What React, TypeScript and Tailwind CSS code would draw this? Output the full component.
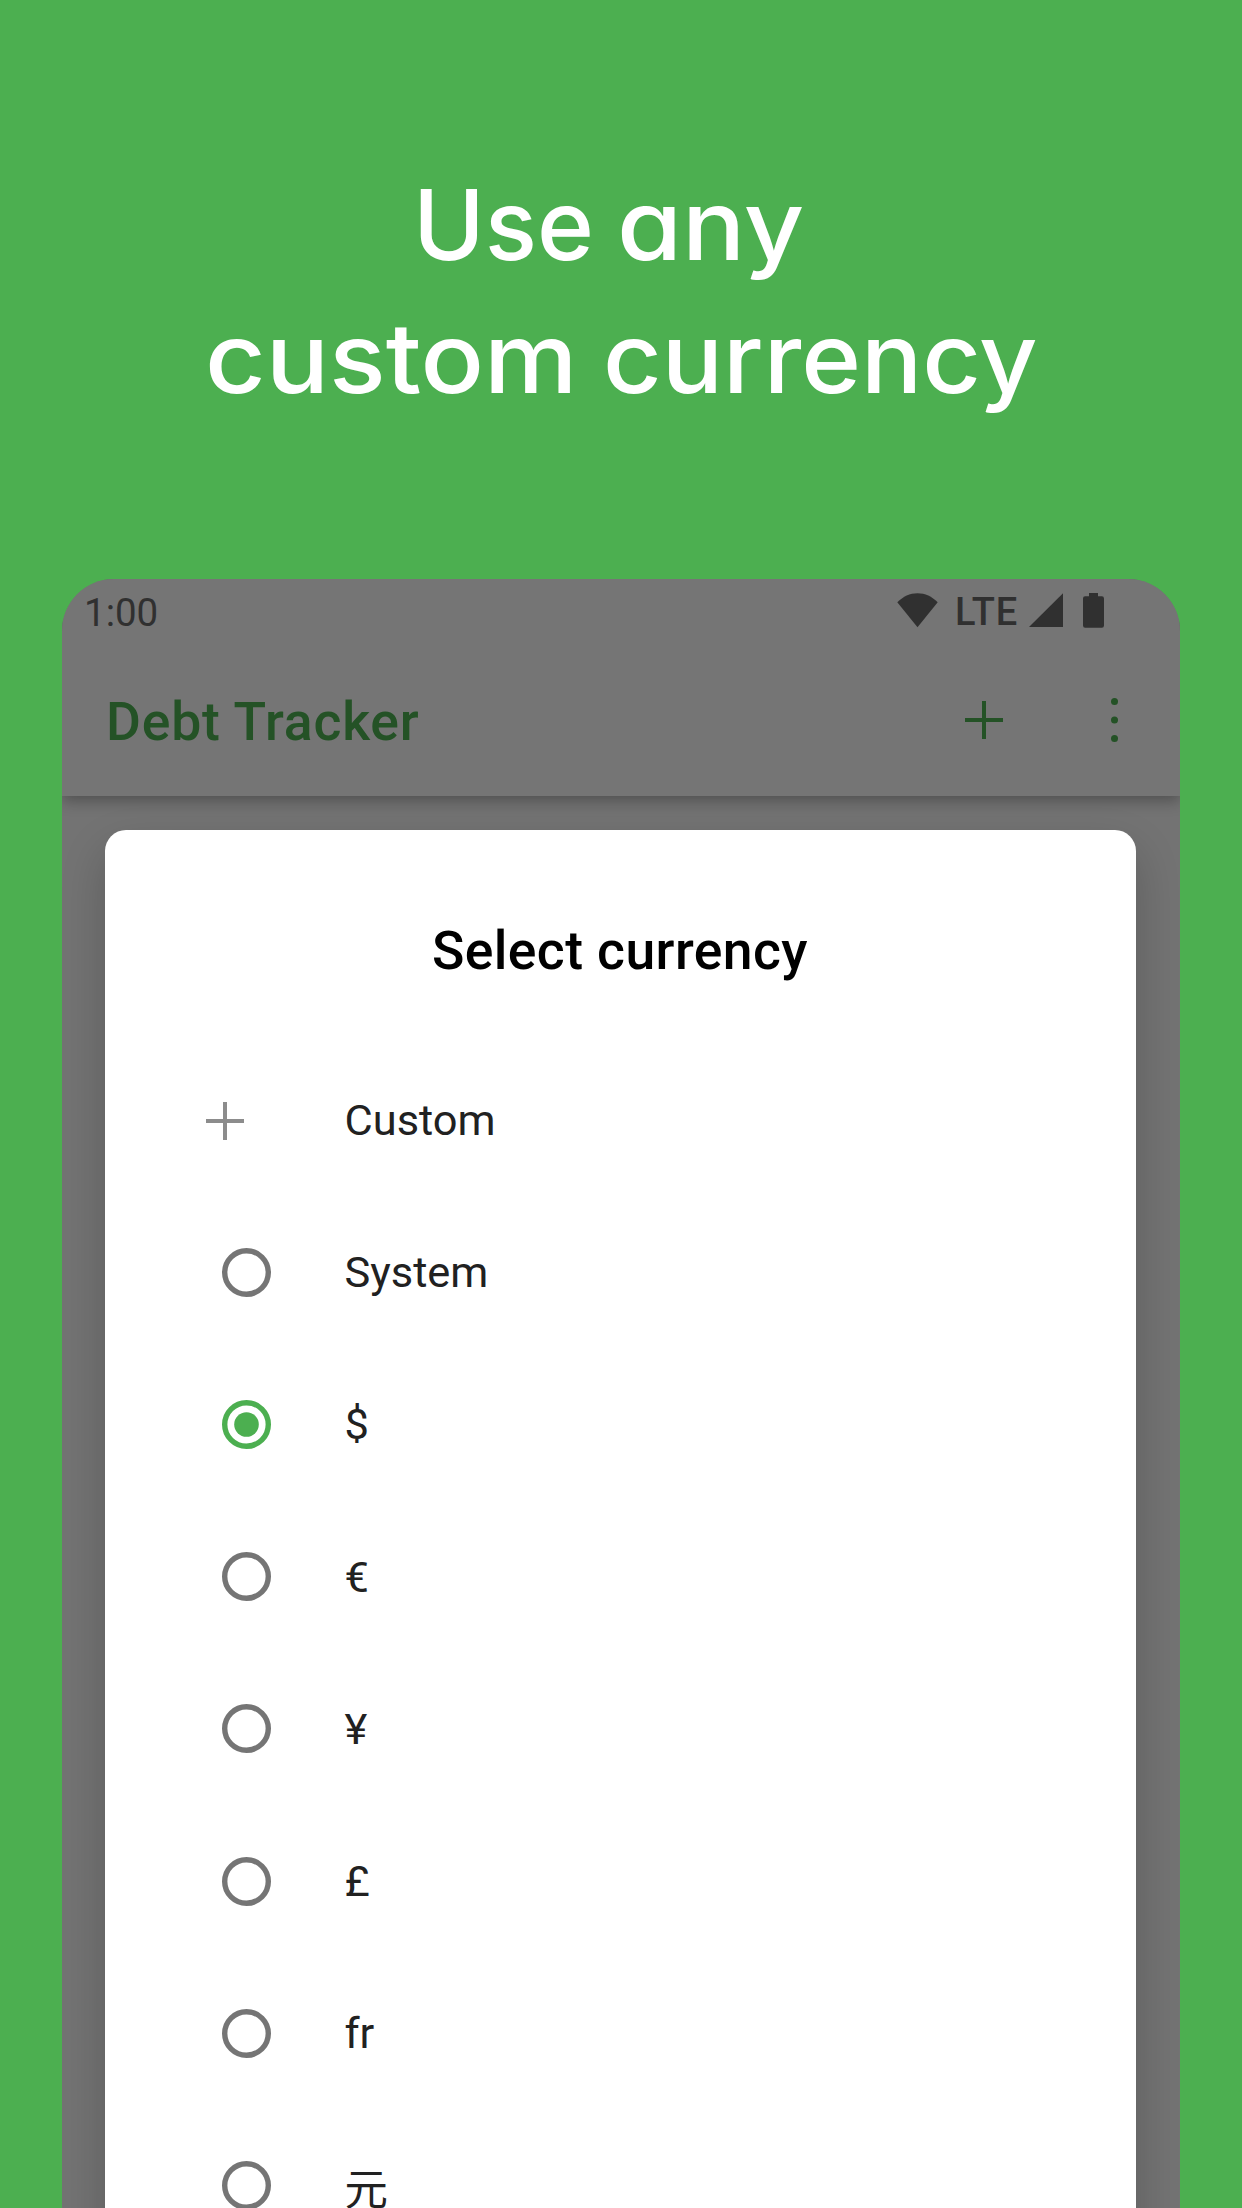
const currencies = ["System", "$", "€", "¥", "£", "fr", "元"];

function Plus({ className }: { className: string }) {
  return (
    <svg className={className} viewBox="0 0 38 38" fill="currentColor">
      <path d="M17 0h4v17h17v4H21v17h-4V21H0v-4h17z" />
    </svg>
  );
}

function Radio({ checked }: { checked: boolean }) {
  return (
    <svg
      className={checked ? "ml-[116.4px] size-[49px] shrink-0 text-[#4caf50]" : "ml-[116.4px] size-[49px] shrink-0 text-[#757575]"}
      viewBox="0 0 49 49"
    >
      <circle cx="24.5" cy="24.5" r="21.8" fill="none" stroke="currentColor" strokeWidth="5.4" />
      {checked && <circle cx="24.5" cy="24.5" r="12.3" fill="currentColor" />}
    </svg>
  );
}

function StatusBar() {
  return (
    <div className="flex h-[68px] items-start pl-[22px] text-[#303030]">
      <span className="mt-[11px] w-[813px] text-[38.5px] leading-[46px]">1:00</span>
      <svg className="mt-[14px] h-[35px] w-[41px]" viewBox="0 0 41 35" fill="currentColor">
        <path d="M.3 9.2C6.2 3.4 12.8 .2 20.5 .2S34.8 3.4 40.7 9.2L20.5 34.3z" />
      </svg>
      <span className="mt-[10px] ml-[17px] w-[74px] text-[38px] leading-[46px] font-medium tracking-[0.8px]">LTE</span>
      <svg className="mt-[14px] h-[35px] w-[34px]" viewBox="0 0 34 35" fill="currentColor">
        <path d="M0 34 34 .3V34z" />
      </svg>
      <svg className="mt-[14px] ml-[20px] h-[35px] w-[21px]" viewBox="0 0 21 35" fill="currentColor">
        <path d="M6 0h9v3.2h3.5A2.3 2.3 0 0 1 21 5.5v27a2.3 2.3 0 0 1-2.5 2.3h-16A2.3 2.3 0 0 1 0 32.5v-27A2.3 2.3 0 0 1 2.5 3.2H6z" />
      </svg>
    </div>
  );
}

function AppBar() {
  return (
    <div className="flex h-[149px] items-start pl-[44px] text-[#245226]">
      <span className="mt-[44px] w-[859px] text-[53.5px] leading-[62px] font-medium tracking-[0.8px]">Debt Tracker</span>
      <Plus className="mt-[54px] size-[38px]" />
      <svg className="mt-[50px] ml-[108px] h-[46px] w-[7px]" viewBox="0 0 7 46" fill="currentColor">
        <circle cx="3.5" cy="4.5" r="3.5" />
        <circle cx="3.5" cy="23" r="3.5" />
        <circle cx="3.5" cy="41.5" r="3.5" />
      </svg>
    </div>
  );
}

export default function App() {
  return (
    <div className="flex h-[2208px] w-[1242px] flex-col overflow-hidden bg-[#4caf50] font-['Roboto','Noto_Sans_CJK_SC',sans-serif]">
      <h1 className="h-[579px] shrink-0 pt-[158px] font-['Inter',sans-serif] text-[97px] leading-[133px] font-medium text-white [font-feature-settings:'cv11']">
        <div className="flex pl-[413px]">
          <span className="w-[204px]">Use</span>
          <span className="origin-left scale-x-[1.085]">any</span>
        </div>
        <div className="flex pl-[205px]">
          <span className="w-[398px]">
            <span className="inline-block origin-left scale-x-[1.085]">custom</span>
          </span>
          <span className="origin-left scale-x-[1.05]">currency</span>
        </div>
      </h1>
      <main className="mx-[62px] flex flex-1 flex-col overflow-hidden rounded-t-[52px] bg-[#737373]">
        <header className="z-10 shrink-0 bg-[#757575] shadow-[0_5px_14px_rgba(0,0,0,0.3)]">
          <StatusBar />
          <AppBar />
        </header>
        <section className="mt-[34px] ml-[43.4px] h-[1500px] w-[1031px] shrink-0 rounded-[21px] bg-white shadow-[0_20px_45px_rgba(0,0,0,0.2)]">
          <h2 className="pt-[90px] pr-[2px] text-center text-[53.5px] leading-[62px] font-medium tracking-[0.4px] text-black">Select currency</h2>
          <ul className="mt-[62px] text-[43.4px] leading-[50px] text-[#212121]">
            <li className="flex h-[152.2px] items-center">
              <Plus className="mt-[1px] ml-[100.6px] size-[38px] shrink-0 text-[#8c8c8c]" />
              <span className="ml-[100.5px] pt-[2px]">Custom</span>
            </li>
            {currencies.map((label) => (
              <li key={label} className="flex h-[152.2px] items-center">
                <Radio checked={label === "$"} />
                <span className={label === "元" ? "ml-[73.7px] pt-[12px]" : "ml-[73.7px] pt-[2px]"}>{label}</span>
              </li>
            ))}
          </ul>
        </section>
      </main>
    </div>
  );
}
